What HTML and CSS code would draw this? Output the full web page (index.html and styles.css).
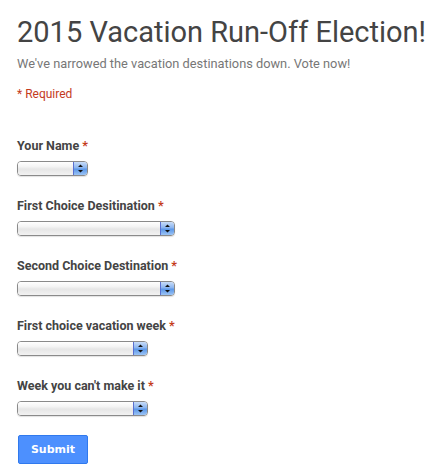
FILE: index.html
```html
<!DOCTYPE html>
<html lang="en">
<head>
  <meta charset="UTF-8">
  <title>2015 Vacation Run-Off Election!</title>
  <link rel="stylesheet" href="styles.css">
</head>
<body>
  <div class="form-wrap">
    <h1>2015 Vacation Run-Off Election!</h1>
    <p class="desc">We've narrowed the vacation destinations down. Vote now!</p>
    <p class="required-note">* Required</p>

    <form class="vote-form">
      <div class="question">
        <label>Your Name <span class="star">*</span></label>
        <div class="select w-short">
          <span class="field"></span>
          <span class="spin"><svg width="5" height="9" viewBox="0 0 5 9"><path d="M2.5 0.5 L5 3 L0 3 Z M0 6 L5 6 L2.5 8.5 Z" fill="#111"/></svg></span>
        </div>
      </div>

      <div class="question">
        <label>First Choice Desitination <span class="star">*</span></label>
        <div class="select w-long">
          <span class="field"></span>
          <span class="spin"><svg width="5" height="9" viewBox="0 0 5 9"><path d="M2.5 0.5 L5 3 L0 3 Z M0 6 L5 6 L2.5 8.5 Z" fill="#111"/></svg></span>
        </div>
      </div>

      <div class="question">
        <label>Second Choice Destination <span class="star">*</span></label>
        <div class="select w-long">
          <span class="field"></span>
          <span class="spin"><svg width="5" height="9" viewBox="0 0 5 9"><path d="M2.5 0.5 L5 3 L0 3 Z M0 6 L5 6 L2.5 8.5 Z" fill="#111"/></svg></span>
        </div>
      </div>

      <div class="question">
        <label>First choice vacation week <span class="star">*</span></label>
        <div class="select w-mid">
          <span class="field"></span>
          <span class="spin"><svg width="5" height="9" viewBox="0 0 5 9"><path d="M2.5 0.5 L5 3 L0 3 Z M0 6 L5 6 L2.5 8.5 Z" fill="#111"/></svg></span>
        </div>
      </div>

      <div class="question">
        <label>Week you can't make it <span class="star">*</span></label>
        <div class="select w-mid">
          <span class="field"></span>
          <span class="spin"><svg width="5" height="9" viewBox="0 0 5 9"><path d="M2.5 0.5 L5 3 L0 3 Z M0 6 L5 6 L2.5 8.5 Z" fill="#111"/></svg></span>
        </div>
      </div>

      <button type="submit" class="submit-btn">Submit</button>
    </form>
  </div>
</body>
</html>
```

FILE: styles.css
```css
/* Base */
* {
  margin: 0;
  padding: 0;
  box-sizing: border-box;
}

body {
  background: #fff;
  font-family: Roboto, "Liberation Sans", Arial, sans-serif;
  color: #444;
}

.form-wrap {
  padding: 14px 0 0 17px;
}

/* Header */
h1 {
  font-size: 29px;
  font-weight: 400;
  color: #444;
  line-height: 36px;
  white-space: nowrap;
}

.desc {
  margin-top: 6px;
  font-size: 12.8px;
  color: #777;
  line-height: 16px;
}

.required-note {
  margin-top: 14px;
  font-size: 12px;
  color: #c43b1d;
  line-height: 16px;
}

/* Questions */
.vote-form {
  padding-top: 36px;
}

.question {
  margin-bottom: 22px;
}

.question label {
  display: block;
  font-size: 12.5px;
  font-weight: bold;
  color: #444;
  line-height: 16px;
  margin-bottom: 7px;
}

.star {
  color: #c43b1d;
}

/* Aqua style pop-up */
.select {
  display: flex;
  height: 15px;
  border: 1px solid #8a8a8a;
  border-radius: 4px;
  overflow: hidden;
  box-shadow: 0 1px 1px rgba(0, 0, 0, 0.12);
}

.w-short { width: 71px; }
.w-long { width: 158px; }
.w-mid { width: 131px; }

.select .field {
  flex: 1;
  background: linear-gradient(#ffffff 0%, #f4f4f4 35%, #e6e6e6 55%, #f2f2f2 100%);
}

.select .spin {
  width: 14px;
  display: flex;
  align-items: center;
  justify-content: center;
  border-left: 1px solid #5a6fd0;
  background: linear-gradient(#c8dcf8 0%, #8ab4ef 45%, #5b97e8 55%, #9cc4f5 100%);
}

/* Submit */
.submit-btn {
  margin-top: -3px;
  margin-left: 1px;
  width: 70px;
  height: 29px;
  border: 1px solid #3079ed;
  border-radius: 2px;
  background: #4d90fe;
  color: #fff;
  font-family: "DejaVu Sans", "Liberation Sans", sans-serif;
  font-size: 11px;
  font-weight: bold;
  cursor: pointer;
}
```
